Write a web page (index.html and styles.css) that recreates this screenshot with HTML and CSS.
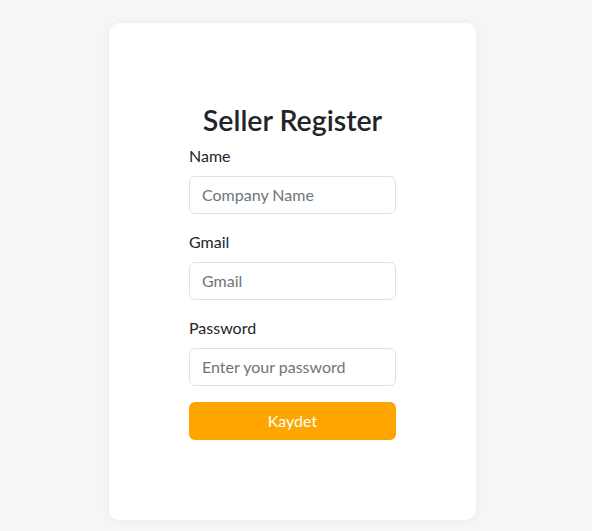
FILE: index.html
```html
<!DOCTYPE html>
<html lang="en">
<head>
<meta charset="utf-8">
<title>Seller Register</title>
<link rel="stylesheet" href="styles.css">
</head>
<body>
<main class="page">
  <section class="card">
    <form class="form">
      <h2 class="title">Seller Register</h2>
      <div class="field">
        <label class="label" for="name">Name</label>
        <input class="input" id="name" type="text" placeholder="Company Name">
      </div>
      <div class="field">
        <label class="label" for="gmail">Gmail</label>
        <input class="input" id="gmail" type="email" placeholder="Gmail">
      </div>
      <div class="field">
        <label class="label" for="password">Password</label>
        <input class="input" id="password" type="password" placeholder="Enter your password">
      </div>
      <button class="btn" type="button">Kaydet</button>
    </form>
  </section>
</main>
</body>
</html>
```
FILE: styles.css
```css
* { box-sizing: border-box; }
html, body { margin: 0; padding: 0; }
body {
  background: #f6f6f6;
  font-family: "Lato", "Open Sans", sans-serif;
  color: #212529;
  font-size: 16px;
  line-height: 1.5;
}
.page {
  padding: 23px 0 11px 109px;
}
.card {
  width: 367px;
  height: 497px;
  background: #fff;
  border-radius: 10px;
  box-shadow: 0 0 8px rgba(0,0,0,0.06);
  display: flex;
  align-items: center;
  justify-content: center;
}
.form {
  width: 207px;
  display: flex;
  flex-direction: column;
}
.title {
  margin: 0 0 8px;
  font-size: 28.5px;
  font-weight: 600;
  line-height: 32px;
  text-align: center;
}
.field {
  display: flex;
  flex-direction: column;
  margin-bottom: 16px;
}
.label {
  margin-bottom: 8px;
}
.input {
  height: 38px;
  padding: 6px 12px;
  font: inherit;
  color: #212529;
  border: 1px solid #dee2e6;
  border-radius: 6px;
  background: #fff;
}
.input::placeholder { color: #6c757d; }
.btn {
  height: 38px;
  border: 0;
  border-radius: 6px;
  background: #ffa500;
  color: #fff;
  font: inherit;
}
```
